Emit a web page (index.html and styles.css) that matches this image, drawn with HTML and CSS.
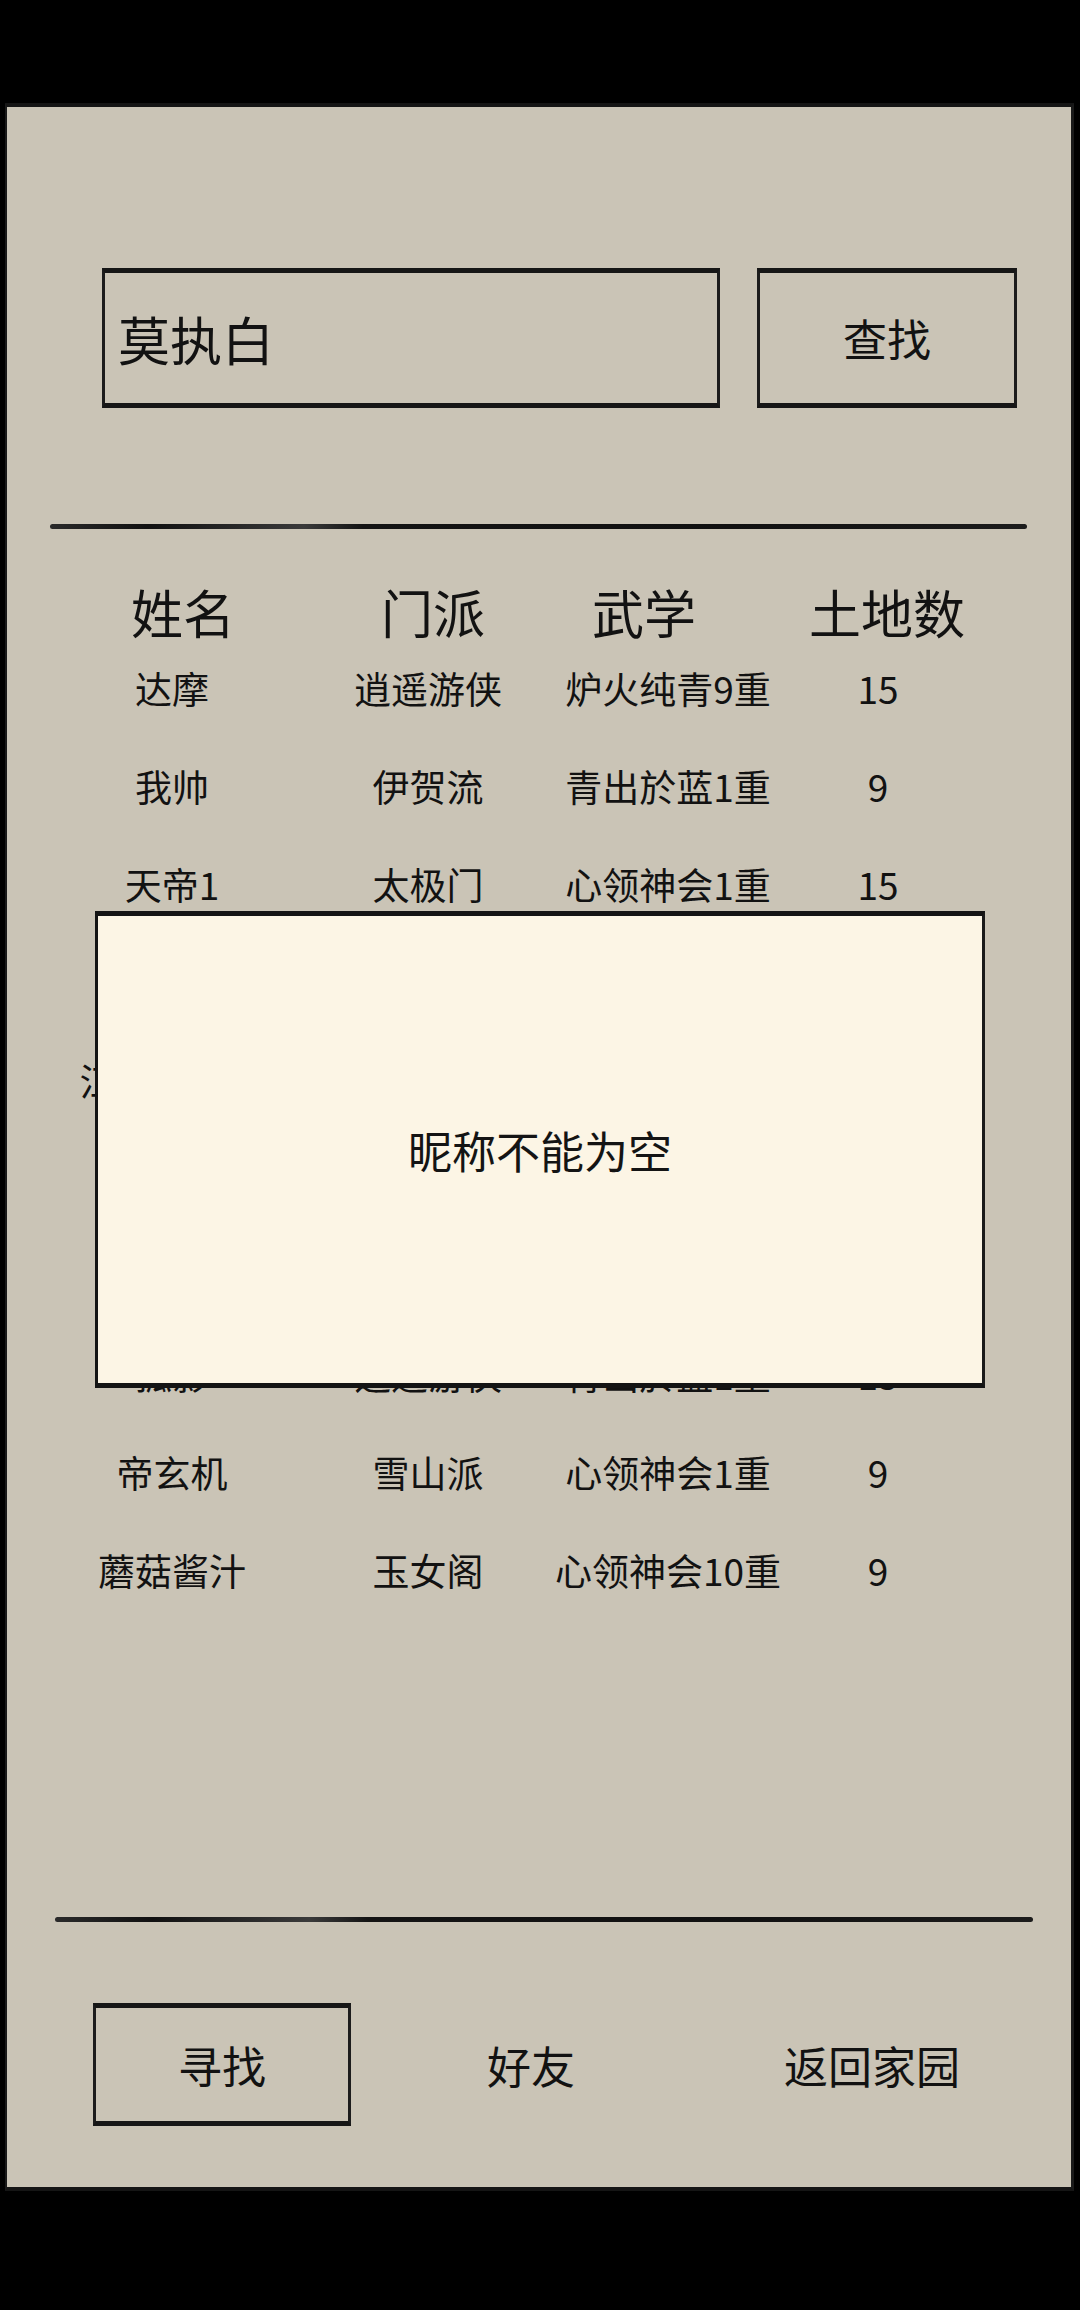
FILE: index.html
```html
<!DOCTYPE html>
<html lang="zh-CN">
<head>
<meta charset="utf-8">
<title>寻找</title>
<link rel="stylesheet" href="styles.css">
</head>
<body>
<div class="screen">
  <div class="paper">
    <div class="search-row">
      <div class="search-input">莫执白</div>
      <div class="search-btn">查找</div>
    </div>
    <div class="divider"></div>
    <div class="thead">
      <div class="hc c1">姓名</div>
      <div class="hc c2">门派</div>
      <div class="hc c3">武学</div>
      <div class="hc c4">土地数</div>
    </div>
    <div class="tbody">
      <div class="row"><div class="cell d1">达摩</div><div class="cell d2">逍遥游侠</div><div class="cell d3">炉火纯青9重</div><div class="cell d4">15</div></div>
      <div class="row"><div class="cell d1">我帅</div><div class="cell d2">伊贺流</div><div class="cell d3">青出於蓝1重</div><div class="cell d4">9</div></div>
      <div class="row"><div class="cell d1">天帝1</div><div class="cell d2">太极门</div><div class="cell d3">心领神会1重</div><div class="cell d4">15</div></div>
      <div class="row"></div>
      <div class="row"><div class="cell d1">江湖小虾米</div></div>
      <div class="row"></div>
      <div class="row"></div>
      <div class="row"><div class="cell d1">孤影</div><div class="cell d2">逍遥游侠</div><div class="cell d3">青出於蓝1重</div><div class="cell d4">15</div></div>
      <div class="row"><div class="cell d1">帝玄机</div><div class="cell d2">雪山派</div><div class="cell d3">心领神会1重</div><div class="cell d4">9</div></div>
      <div class="row"><div class="cell d1">蘑菇酱汁</div><div class="cell d2">玉女阁</div><div class="cell d3">心领神会10重</div><div class="cell d4">9</div></div>
    </div>
    <div class="divider divider-bottom"></div>
    <div class="nav">
      <div class="nav-item nav-active">寻找</div>
      <div class="nav-item nav-friend">好友</div>
      <div class="nav-item nav-home">返回家园</div>
    </div>
    <div class="modal">
      <div class="modal-text">昵称不能为空</div>
    </div>
  </div>
</div>
</body>
</html>
```
FILE: styles.css
```css
* { box-sizing: border-box; }
html, body { margin: 0; padding: 0; background: #000; }
body {
  font-family: "Noto Sans CJK SC", "Noto Sans", sans-serif;
  color: #121212;
}
.screen {
  width: 1080px;
  height: 2310px;
  padding-top: 103px;
  overflow: hidden;
}
.paper {
  position: relative;
  margin-left: 5px;
  width: 1069px;
  height: 2088px;
  background: #cac4b6;
  border-left: 2px solid #1a1a1a;
  border-right: 3px solid #1a1a1a;
  border-top: 4px solid #151515;
  border-bottom: 4px solid #151515;
}
.search-row {
  display: flex;
  gap: 37px;
  margin-top: 161px;
  padding-left: 95px;
  height: 140px;
}
.search-input, .search-btn {
  height: 140px;
  border-top: 5px solid #161616;
  border-bottom: 5px solid #161616;
  border-left: 3px solid #1c1c1c;
  border-right: 3px solid #1c1c1c;
  display: flex;
  align-items: center;
}
.search-input {
  width: 618px;
  padding-left: 13px;
  font-size: 52px;
}
.search-btn {
  width: 260px;
  justify-content: center;
  font-size: 44px;
}
.divider {
  margin-top: 116px;
  margin-left: 43px;
  width: 977px;
  height: 5px;
  border-radius: 3px;
  background: linear-gradient(90deg, #2a2a2a 0%, #111 10%, #3a3a3a 26%, #141414 32%, #111 70%, #1c1c1c 100%);
}
.thead {
  display: flex;
  height: 63px;
  margin-top: 47px;
  padding-top: 7px;
  padding-left: 46px;
  align-items: center;
}
.hc {
  display: flex;
  justify-content: center;
  font-size: 52px;
  white-space: nowrap;
}
.c1 { width: 260px; }
.c2 { width: 240px; }
.c3 { width: 182px; }
.c4 { width: 304px; }
.tbody { display: flex; flex-direction: column; }
.row {
  display: flex;
  align-items: center;
  height: 98px;
  padding-left: 35px;
}
.cell {
  display: flex;
  justify-content: center;
  font-size: 37px;
  white-space: nowrap;
}
.d1 { width: 260px; }
.d2 { width: 252px; }
.d3 { width: 228px; }
.d4 { width: 192px; }
.divider-bottom {
  margin-top: 298px;
  margin-left: 48px;
  width: 978px;
}
.nav {
  display: flex;
  align-items: center;
  margin-top: 81px;
  padding-left: 86px;
  height: 123px;
  font-size: 44px;
}
.nav-item {
  display: flex;
  justify-content: center;
  align-items: center;
  height: 123px;
  white-space: nowrap;
}
.nav-active {
  width: 258px;
  border-top: 5px solid #161616;
  border-bottom: 5px solid #161616;
  border-left: 3px solid #1c1c1c;
  border-right: 3px solid #1c1c1c;
}
.nav-friend { width: 360px; }
.nav-home { width: 322px; }
.modal {
  position: absolute;
  left: 88px;
  top: 804px;
  width: 890px;
  height: 477px;
  background: #fcf5e5;
  border-top: 5px solid #141414;
  border-bottom: 5px solid #141414;
  border-left: 3px solid #141414;
  border-right: 3px solid #1a1a1a;
  display: flex;
  align-items: center;
  justify-content: center;
}
.modal-text {
  font-size: 44px;
  color: #141414;
}
```
